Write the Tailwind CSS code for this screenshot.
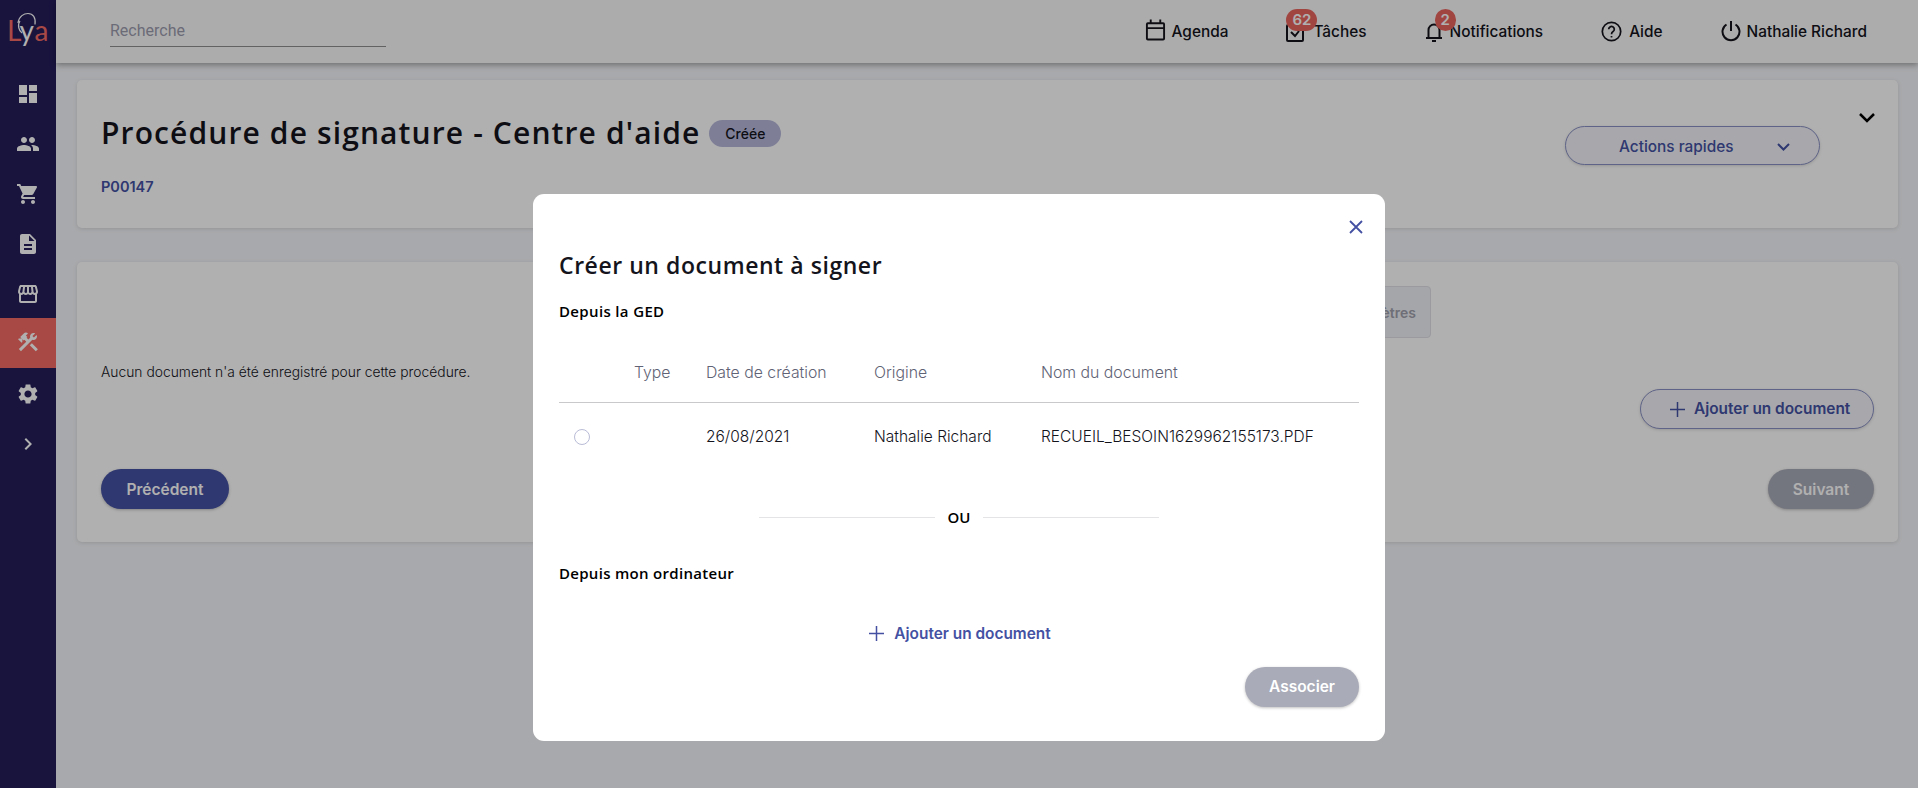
<!DOCTYPE html>
<html lang="fr">

<head>
  <meta charset="UTF-8" />
  <title>Procédure de signature</title>
  <script src="https://cdn.jsdelivr.net/npm/@tailwindcss/browser@4"></script>
</head>

<body class="bg-[#f4f5f9] text-[#14141c] font-['Inter',sans-serif] overflow-hidden">
  <div class="flex h-[788px] w-[1918px]">

    <!-- Sidebar -->
    <aside class="w-[56px] shrink-0 bg-[#231d5b] text-white">
      <div class="relative h-[68px] flex justify-center pt-[14px]">
        <svg class="absolute left-[14px] top-[11px] w-[26px] h-[36px]" viewBox="0 0 26 36" fill="none" stroke="#fff" stroke-width="1.200">
          <path d="M4 12C5 5 10 2.500 14 2.500c5 0 8 4 7 11" />
          <path d="M6 10C3 14 5 20 8 22" />
        </svg>
        <span class="mt-[1px] text-[28px] leading-[30px] font-['Lato',sans-serif] font-normal text-[#f36b65] tracking-[0.8px]">L<span class="text-white">y</span>a</span>
      </div>
      <nav class="flex flex-col">
        <a class="h-[50px] pt-[2px] flex items-center justify-center">
          <svg class="w-6 h-6" viewBox="0 0 24 24" fill="currentColor"><path d="M3 13h8V3H3v10zm0 8h8v-6H3v6zm10 0h8V11h-8v10zm0-18v6h8V3h-8z" /></svg>
        </a>
        <a class="h-[50px] pt-[2px] flex items-center justify-center">
          <svg class="w-6 h-6" viewBox="0 0 24 24" fill="currentColor"><path d="M16 11c1.66 0 2.99-1.34 2.99-3S17.66 5 16 5c-1.66 0-3 1.34-3 3s1.34 3 3 3zm-8 0c1.66 0 2.99-1.34 2.99-3S9.66 5 8 5C6.34 5 5 6.34 5 8s1.34 3 3 3zm0 2c-2.33 0-7 1.17-7 3.5V19h14v-2.5c0-2.33-4.67-3.5-7-3.5zm8 0c-.29 0-.62.02-.97.05 1.16.84 1.97 1.97 1.97 3.45V19h6v-2.5c0-2.33-4.67-3.5-7-3.5z" /></svg>
        </a>
        <a class="h-[50px] pt-[2px] flex items-center justify-center">
          <svg class="w-6 h-6" viewBox="0 0 24 24" fill="currentColor"><path d="M7 18c-1.1 0-1.99.9-1.99 2S5.9 22 7 22s2-.9 2-2-.9-2-2-2zM1 2v2h2l3.6 7.59-1.35 2.45c-.16.28-.25.61-.25.96 0 1.1.9 2 2 2h12v-2H7.42c-.14 0-.25-.11-.25-.25l.03-.12.9-1.63h7.45c.75 0 1.41-.41 1.75-1.03l3.58-6.49c.08-.14.12-.31.12-.48 0-.55-.45-1-1-1H5.21l-.94-2H1zm16 16c-1.1 0-1.99.9-1.99 2s.89 2 1.99 2 2-.9 2-2-.9-2-2-2z" /></svg>
        </a>
        <a class="h-[50px] pt-[2px] flex items-center justify-center">
          <svg class="w-6 h-6" viewBox="0 0 24 24" fill="currentColor"><path d="M14 2H6c-1.1 0-1.99.9-1.99 2L4 20c0 1.1.89 2 1.99 2H18c1.1 0 2-.9 2-2V8l-6-6zm2 16H8v-2h8v2zm0-4H8v-2h8v2zm-3-5V3.5L18.5 9H13z" /></svg>
        </a>
        <a class="h-[50px] pt-[2px] flex items-center justify-center">
          <svg class="w-6 h-6" viewBox="0 0 24 24" fill="currentColor"><path d="M21.9 8.89l-1.05-4.37c-.22-.9-1-1.52-1.91-1.52H5.05c-.9 0-1.69.63-1.9 1.52L2.1 8.89c-.24 1.02-.02 2.06.62 2.88.08.11.19.19.28.29V19c0 1.1.9 2 2 2h14c1.1 0 2-.9 2-2v-6.94c.09-.09.2-.18.28-.28.64-.82.87-1.87.62-2.89zm-2.99-3.9l1.05 4.37c.1.42.01.84-.25 1.17-.14.18-.44.47-.94.47-.61 0-1.14-.49-1.21-1.14L16.98 5l1.93-.01zM13 5h1.96l.54 4.52c.05.39-.07.78-.33 1.07-.22.26-.54.41-.95.41-.67 0-1.22-.59-1.22-1.31V5zM8.49 9.52L9.04 5H11v4.69c0 .72-.55 1.31-1.29 1.31-.34 0-.65-.15-.89-.41-.25-.29-.37-.68-.33-1.07zm-4.45-.16L5.05 5h1.97l-.58 4.86c-.08.65-.6 1.14-1.21 1.14-.49 0-.8-.29-.93-.47-.27-.32-.36-.75-.26-1.17zM5 19v-6.03c.08.01.15.03.23.03.87 0 1.66-.36 2.24-.95.6.6 1.4.95 2.31.95.87 0 1.65-.36 2.23-.93.59.57 1.39.93 2.29.93.84 0 1.64-.35 2.24-.95.58.59 1.37.95 2.24.95.08 0 .15-.02.23-.03V19H5z" /></svg>
        </a>
        <a class="h-[50px] pb-[3px] flex items-center justify-center bg-[#f36b65]">
          <svg class="w-6 h-6" viewBox="0 0 24 24" fill="currentColor"><path d="M13.78 15.3l6 6 2.11-2.16-6-6-2.11 2.16zM17.5 10c1.93 0 3.5-1.57 3.5-3.5 0-.58-.16-1.12-.41-1.6l-2.7 2.7-1.49-1.49 2.7-2.7c-.48-.25-1.02-.41-1.6-.41C15.57 3 14 4.57 14 6.5c0 .41.08.8.21 1.16l-1.85 1.85-1.78-1.78.71-.71-1.41-1.41L12 3.49c-1.17-1.17-3.07-1.17-4.24 0L4.22 7.03l1.41 1.41H2.81l-.71.71 3.54 3.54.71-.71V9.15l1.41 1.41.71-.71 1.78 1.78-7.41 7.41 2.12 2.12L16.34 9.79c.36.13.75.21 1.16.21z" /></svg>
        </a>
        <a class="h-[50px] pt-[2px] flex items-center justify-center">
          <svg class="w-6 h-6" viewBox="0 0 24 24" fill="currentColor"><path d="M19.14 12.94c.04-.3.06-.61.06-.94 0-.32-.02-.64-.07-.94l2.03-1.58c.18-.14.23-.41.12-.61l-1.92-3.32c-.12-.22-.37-.29-.59-.22l-2.39.96c-.5-.38-1.03-.7-1.62-.94l-.36-2.54c-.04-.24-.24-.41-.48-.41h-3.84c-.24 0-.43.17-.47.41l-.36 2.54c-.59.24-1.13.57-1.62.94l-2.39-.96c-.22-.08-.47 0-.59.22L2.74 8.87c-.12.21-.08.47.12.61l2.03 1.58c-.05.3-.09.63-.09.94s.02.64.07.94l-2.03 1.58c-.18.14-.23.41-.12.61l1.92 3.32c.12.22.37.29.59.22l2.39-.96c.5.38 1.03.7 1.62.94l.36 2.54c.05.24.24.41.48.41h3.84c.24 0 .44-.17.47-.41l.36-2.54c.59-.24 1.13-.56 1.62-.94l2.39.96c.22.08.47 0 .59-.22l1.92-3.32c.12-.22.07-.47-.12-.61l-2.01-1.58zM12 15.6c-1.98 0-3.6-1.62-3.6-3.6s1.62-3.6 3.6-3.6 3.6 1.62 3.6 3.6-1.62 3.6-3.6 3.6z" /></svg>
        </a>
        <a class="h-[50px] pt-[2px] flex items-center justify-center">
          <svg class="w-6 h-6" viewBox="0 0 24 24" fill="currentColor"><path d="M8.59 16.59 13.17 12 8.59 7.41 10 6l6 6-6 6z" /></svg>
        </a>
      </nav>
    </aside>

    <div class="flex-1 flex flex-col">
      <!-- Header -->
      <header class="h-[63px] bg-[#fafafa] shadow-[0_2px_6px_rgba(0,0,0,0.35)] flex items-center justify-between pl-[54px] pr-[51px] z-10">
        <div class="w-[276px] h-[31px] mt-[-1px] border-b border-[#8f8f8f] font-['Roboto',sans-serif] text-[16px] leading-[29px] text-[#9c9cae]">Recherche</div>
        <nav class="flex items-center gap-[58px] pt-[1px] text-[15.400px] font-medium">
          <a class="flex items-center gap-[6px]">
            <svg class="w-[21px] h-[24px] mt-[-3px]" viewBox="0 0 22 24" fill="none" stroke="currentColor" stroke-width="2"><rect x="2" y="5" width="18" height="17" rx="1" /><path d="M2 10h18M6 1v4M16 1v4" /></svg>
            Agenda
          </a>
          <a class="relative flex items-center gap-[9px]">
            <svg class="w-[18px] h-[18px] mt-[3px]" viewBox="0 0 18 18" fill="none" stroke="currentColor" stroke-width="2"><rect x="1" y="1" width="16" height="16" rx="1" /><path d="m5 8 4 4 4-5" /></svg>
            Tâches
            <span class="absolute left-0 top-[-11px] w-[31px] h-[22px] rounded-full bg-[#e9655f] text-white text-[15px] font-semibold leading-[22px] text-center">62</span>
          </a>
          <a class="relative flex items-center gap-[7px]">
            <svg class="w-[18px] h-[22px]" viewBox="0 0 18 22" fill="none" stroke="currentColor" stroke-width="2"><path d="M1 17h16M3.500 17V9a5.500 5.500 0 0 1 11 0v8" /><path d="M7 20h4" /></svg>
            Notifications
            <span class="absolute left-[10px] top-[-11px] w-[21px] h-[22px] rounded-full bg-[#e9655f] text-white text-[15px] font-semibold leading-[22px] text-center">2</span>
          </a>
          <a class="flex items-center gap-[7px]">
            <svg class="w-[21px] h-[21px]" viewBox="0 0 24 24" fill="none" stroke="currentColor" stroke-width="2"><circle cx="12" cy="12" r="10.500" /><path d="M8.800 9.500a3.200 3.200 0 1 1 5 2.600c-1.200.8-1.800 1.500-1.800 2.900" /><path d="M12 17.200v1.600" /></svg>
            Aide
          </a>
          <a class="flex items-center gap-[6px]">
            <svg class="w-[20px] h-[22px] mt-[-2px]" viewBox="0 0 20 22" fill="none" stroke="currentColor" stroke-width="2"><path d="M10 1v10" /><path d="M5.500 4.500a8.500 8.500 0 1 0 9 0" /></svg>
            Nathalie Richard
          </a>
        </nav>
      </header>

      <!-- Main Content -->
      <main class="pl-[21px] pr-[20px] pt-[17px] flex flex-col gap-[34px]">

        <!-- Procedure card -->
        <section class="h-[148px] bg-white rounded-[5px] shadow-[0_1px_4px_rgba(0,0,0,0.12)] pl-[24px] pr-[23px] flex justify-between">
          <div class="pt-[33px]">
            <div class="flex items-center gap-[9px]">
              <h1 class="font-['Open_Sans',sans-serif] font-semibold text-[30px] leading-[40px] tracking-[1.120px]">Procédure de signature - Centre d'aide</h1>
              <span class="w-[72px] h-[27px] rounded-full bg-[#b7b8db] text-[14px] font-medium leading-[27px] text-center">Créée</span>
            </div>
            <p class="mt-[24px] text-[14.500px] leading-[20px] font-semibold text-[#4451a3]">P00147</p>
          </div>
          <div class="flex items-start pt-[33px] gap-[39px]">
            <button class="mt-[13px] w-[255px] h-[39px] rounded-full border border-[#8a90c4] bg-[#f3f4fa] text-[#4451a3] text-[15.400px] font-medium shadow-[0_1px_3px_rgba(0,0,0,0.15)] flex items-center pl-[53px] pt-[2px] gap-[43px]">
              Actions rapides
              <svg class="w-[13px] h-[8px]" viewBox="0 0 13 8" fill="none" stroke="currentColor" stroke-width="2"><path d="m1 1 5.500 5.500L12 1" /></svg>
            </button>
            <svg class="w-[16px] h-[10px]" viewBox="0 0 16 10" fill="none" stroke="#000" stroke-width="2.500"><path d="m1 1 7 7 7-7" /></svg>
          </div>
        </section>

        <!-- Documents card -->
        <section class="relative h-[280px] bg-white rounded-[5px] shadow-[0_1px_4px_rgba(0,0,0,0.12)] pl-[24px] pr-[24px] pt-[24px]">
          <div class="flex justify-end pr-[443px]">
            <button class="w-[160px] h-[52px] rounded-[4px] border border-[#dfe0e6] bg-[#f0f1f5] text-[#a0a1ad] text-[14px] font-semibold text-right pr-[14px]">Paramètres</button>
          </div>
          <p class="mt-[24px] h-[20px] text-[13.850px] leading-[20px] font-light text-[#14141c]">Aucun document n'a été enregistré pour cette procédure.</p>
          <div class="flex justify-end mt-[7px]">
            <button class="w-[234px] h-[40px] rounded-full border border-[#8a90c4] bg-[#f3f4fa] text-[#4451a3] text-[15.400px] font-semibold shadow-[0_1px_3px_rgba(0,0,0,0.15)] flex items-center pl-[29px] gap-[9px]">
              <svg class="w-[15px] h-[15px]" viewBox="0 0 15 15" fill="none" stroke="currentColor" stroke-width="1.500"><path d="M7.500 0v15M0 7.500h15" /></svg>
              Ajouter un document
            </button>
          </div>
          <div class="flex justify-between mt-[40px]">
            <button class="w-[128px] h-[40px] rounded-full bg-[#4451a3] text-white text-[15.500px] font-semibold pt-[2px] shadow-[0_1px_3px_rgba(0,0,0,0.25)]">Précédent</button>
            <button class="w-[106px] h-[40px] rounded-full bg-[#a9abb8] text-white text-[15.500px] font-semibold pt-[2px] shadow-[0_1px_3px_rgba(0,0,0,0.25)]">Suivant</button>
          </div>
        </section>
      </main>
    </div>
  </div>

  <!-- Scrim + modal -->
  <div class="fixed inset-0 z-50 bg-black/[0.31] flex justify-center pt-[194px]">
    <div class="relative w-[852px] h-[547px] bg-white rounded-[11px] px-[26px] pt-[53px]">
      <svg class="absolute right-[22px] top-[26px] w-[14px] h-[14px]" viewBox="0 0 14 14" fill="none" stroke="#4451a3" stroke-width="1.800"><path d="m1 1 12 12M13 1 1 13" /></svg>
      <h2 class="font-['Open_Sans',sans-serif] font-semibold text-[23px] leading-[36px] tracking-[0.55px]">Créer un document à signer</h2>
      <h3 class="mt-[18px] font-['Open_Sans',sans-serif] font-semibold text-[15px] leading-[20px] tracking-[0.35px] text-black">Depuis la GED</h3>

      <!-- Table -->
      <div class="mt-[17px] w-[800px]">
        <div class="grid grid-cols-[75px_72px_168px_167px_1fr] h-[65px] items-center border-b border-[#c9c9cc] pt-[6px] text-[15.800px] font-light text-[#5f6375]">
          <span></span><span>Type</span><span>Date de création</span><span>Origine</span><span>Nom du document</span>
        </div>
        <div class="grid grid-cols-[75px_72px_168px_167px_1fr] h-[68px] items-center text-[15.500px] font-light text-[#14141c]">
          <span class="ml-[15px] w-4 h-4 rounded-full border border-[#b9bcd6]"></span><span></span><span>26/08/2021</span><span>Nathalie Richard</span><span>RECUEIL_BESOIN1629962155173.PDF</span>
        </div>
      </div>

      <!-- OU separator -->
      <div class="mt-[36px] mx-auto w-[400px] flex items-center gap-[13px] font-['Open_Sans',sans-serif] font-semibold text-[15px] leading-[20px] text-black">
        <span class="flex-1 h-px bg-[#e4e4e7]"></span>OU<span class="flex-1 h-px bg-[#e4e4e7]"></span>
      </div>

      <h3 class="mt-[36px] font-['Open_Sans',sans-serif] font-semibold text-[15px] leading-[20px] tracking-[0.3px] text-black">Depuis mon ordinateur</h3>
      <div class="mt-[39px] flex justify-center items-center gap-[10px] pl-[2px] text-[15.400px] font-semibold text-[#4451a3]">
        <svg class="w-[15px] h-[15px]" viewBox="0 0 15 15" fill="none" stroke="currentColor" stroke-width="1.500"><path d="M7.500 0v15M0 7.500h15" /></svg>
        Ajouter un document
      </div>
      <div class="mt-[22px] flex justify-end">
        <button class="w-[114px] h-[40px] rounded-full bg-[#a9abb8] text-white text-[15.500px] font-semibold shadow-[0_1px_3px_rgba(0,0,0,0.25)]">Associer</button>
      </div>
    </div>
  </div>
</body>

</html>
